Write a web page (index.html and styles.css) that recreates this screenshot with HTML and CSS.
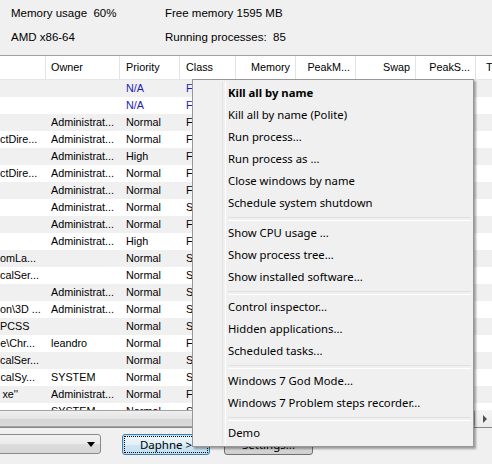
FILE: index.html
```html
<!DOCTYPE html>
<html>
	<head>
		<meta charset="UTF-8">
		<title>Daphne</title>
		<link rel="stylesheet" href="styles.css">
	</head>
	<body>
		<div class="win">
			<div class="stats">
				<span>Memory usage&nbsp; 60%</span>
				<span>Free memory 1595 MB</span>
				<span>AMD x86-64</span>
				<span>Running processes:&nbsp; 85</span>
			</div>

			<div class="list">
				<div class="head">
					<div class="c name"></div>
					<div class="c owner">Owner</div>
					<div class="c prio">Priority</div>
					<div class="c cls">Class</div>
					<div class="c num">Memory</div>
					<div class="c num">PeakM...</div>
					<div class="c num">Swap</div>
					<div class="c num">PeakS...</div>
					<div class="c last">T</div>
				</div>
				<div class="rows">
					<div class="row sys"><div class="c name"></div><div class="c owner"></div><div class="c prio">N/A</div><div class="c cls">F</div></div>
					<div class="row sys"><div class="c name"></div><div class="c owner"></div><div class="c prio">N/A</div><div class="c cls">F</div></div>
					<div class="row"><div class="c name"></div><div class="c owner">Administrat...</div><div class="c prio">Normal</div><div class="c cls">F</div></div>
					<div class="row"><div class="c name">ctDire...</div><div class="c owner">Administrat...</div><div class="c prio">Normal</div><div class="c cls">F</div></div>
					<div class="row"><div class="c name"></div><div class="c owner">Administrat...</div><div class="c prio">High</div><div class="c cls">F</div></div>
					<div class="row"><div class="c name">ctDire...</div><div class="c owner">Administrat...</div><div class="c prio">Normal</div><div class="c cls">F</div></div>
					<div class="row"><div class="c name"></div><div class="c owner">Administrat...</div><div class="c prio">Normal</div><div class="c cls">F</div></div>
					<div class="row"><div class="c name"></div><div class="c owner">Administrat...</div><div class="c prio">Normal</div><div class="c cls">S</div></div>
					<div class="row"><div class="c name"></div><div class="c owner">Administrat...</div><div class="c prio">Normal</div><div class="c cls">F</div></div>
					<div class="row"><div class="c name"></div><div class="c owner">Administrat...</div><div class="c prio">High</div><div class="c cls">F</div></div>
					<div class="row"><div class="c name">omLa...</div><div class="c owner"></div><div class="c prio">Normal</div><div class="c cls">S</div></div>
					<div class="row"><div class="c name">calSer...</div><div class="c owner"></div><div class="c prio">Normal</div><div class="c cls">S</div></div>
					<div class="row"><div class="c name"></div><div class="c owner">Administrat...</div><div class="c prio">Normal</div><div class="c cls">S</div></div>
					<div class="row"><div class="c name">on\3D ...</div><div class="c owner">Administrat...</div><div class="c prio">Normal</div><div class="c cls">S</div></div>
					<div class="row"><div class="c name pcss">PCSS</div><div class="c owner"></div><div class="c prio">Normal</div><div class="c cls">S</div></div>
					<div class="row"><div class="c name">e\Chr...</div><div class="c owner">leandro</div><div class="c prio">Normal</div><div class="c cls">F</div></div>
					<div class="row"><div class="c name">calSer...</div><div class="c owner"></div><div class="c prio">Normal</div><div class="c cls">S</div></div>
					<div class="row"><div class="c name">calSy...</div><div class="c owner">SYSTEM</div><div class="c prio">Normal</div><div class="c cls">S</div></div>
					<div class="row"><div class="c name exe">xe''</div><div class="c owner">Administrat...</div><div class="c prio">Normal</div><div class="c cls">F</div></div>
					<div class="row"><div class="c name"></div><div class="c owner">SYSTEM</div><div class="c prio">Normal</div><div class="c cls">S</div></div>
				</div>
				<div class="hscroll">
					<div class="thumb"></div>
					<div class="arrow"></div>
				</div>
			</div>

			<div class="bottom">
				<div class="combo"><span class="caret"></span></div>
				<div class="btn focus"><span>Daphne &gt;</span></div>
				<div class="btn"><span>Settings...</span></div>
			</div>

			<!-- context menu -->
			<ul class="menu">
				<li class="bold">Kill all by name</li>
				<li>Kill all by name (Polite)</li>
				<li>Run process...</li>
				<li>Run process as ...</li>
				<li>Close windows by name</li>
				<li>Schedule system shutdown</li>
				<li class="sep"></li>
				<li>Show CPU usage ...</li>
				<li>Show process tree...</li>
				<li>Show installed software...</li>
				<li class="sep"></li>
				<li>Control inspector...</li>
				<li>Hidden applications...</li>
				<li>Scheduled tasks...</li>
				<li class="sep"></li>
				<li>Windows 7 God Mode...</li>
				<li>Windows 7 Problem steps recorder...</li>
				<li class="sep"></li>
				<li>Demo</li>
			</ul>
		</div>
	</body>
</html>
```

FILE: styles.css
```css
*{
	padding: 0;
	margin: 0;
	box-sizing: border-box;
}
body{
	background: #f0f0f0;
	overflow: hidden;
}
.win{
	width: 492px;
	height: 464px;
	position: relative;
	overflow: hidden;
	font-family: "Liberation Sans", Arial, sans-serif;
	font-size: 10.8px;
	color: #000;
}

/* top info panel */
.stats{
	height: 56px;
	display: grid;
	grid-template-columns: 154px 1fr;
	grid-auto-rows: 16px;
	row-gap: 8px;
	padding: 5px 0 0 11px;
	border-bottom: 1px solid #a0a0a0;
	font-size: 11.5px;
	line-height: 16px;
	white-space: nowrap;
}

/* process list */
.list{
	background: #fff;
	border-bottom: 1px solid #828790;
}
.head, .row{
	display: flex;
	white-space: nowrap;
}
.head{
	height: 24px;
	line-height: 23px;
	border-bottom: 1px solid #e5e5e5;
}
.head .c{
	border-right: 1px solid #e3e3e3;
}
.c{
	flex: none;
	overflow: hidden;
}
.name{width: 46px; text-align: right; padding-right: 11px;}
.name.pcss{padding-right: 24px;}
.name.exe{padding-right: 28px;}
.owner{width: 74px; padding-left: 5px;}
.prio{width: 60px; padding-left: 6px;}
.cls{width: 56px; padding-left: 6px;}
.num{width: 60px; text-align: right; padding-right: 5px;}
.head .num:first-of-type{width: 59px;}
.last{width: 40px; padding-left: 10px;}
.head .last{border-right: none;}

.rows{
	height: 330px;
	overflow: hidden;
}
.row{
	height: 17px;
	line-height: 17px;
}
.row:nth-child(odd){
	background: #f0f0f0;
}
.row.sys .prio, .row.sys .cls{
	color: #1c1cb0;
}

.hscroll{
	height: 17px;
	display: flex;
	background: linear-gradient(#f4f4f4, #ececec);
}
.thumb{
	flex: 1;
	margin-left: -4px;
	border: 1px solid #a3a3a3;
	border-radius: 2px;
	background: linear-gradient(#f0f0f0 0%, #e4e4e4 50%, #d5d5d5 50%, #dadada 100%);
}
.arrow{
	width: 17px;
	position: relative;
}
.arrow:after{
	content: "";
	position: absolute;
	left: 8px;
	top: 5px;
	border-left: 4px solid #505050;
	border-top: 4px solid transparent;
	border-bottom: 4px solid transparent;
}

/* buttons row */
.bottom{
	height: 36px;
	display: flex;
	align-items: flex-start;
	padding-top: 6px;
}
.combo{
	width: 107px;
	height: 20px;
	margin-left: -6px;
	border: 1px solid #8a8a8a;
	border-radius: 3px;
	background: linear-gradient(#f2f2f2 0%, #ebebeb 50%, #dddddd 50%, #d6d6d6 100%);
	position: relative;
}
.caret{
	position: absolute;
	right: 5px;
	top: 7px;
	border-top: 5px solid #000;
	border-left: 4px solid transparent;
	border-right: 4px solid transparent;
}
.btn{
	width: 88px;
	height: 21px;
	margin-left: 21px;
	border: 1px solid #707070;
	border-radius: 3px;
	background: linear-gradient(#f2f2f2 0%, #ebebeb 50%, #dddddd 50%, #cfcfcf 100%);
	display: flex;
	align-items: center;
	justify-content: center;
	font-family: "Noto Sans", sans-serif;
	font-size: 11.5px;
}
.btn + .btn{
	margin-left: 14px;
	width: 89px;
}
.btn.focus{
	border-color: #3c7fb1;
	box-shadow: inset 0 0 0 1px #b9e2f8;
	background: linear-gradient(#eef7fc 0%, #e2f0f9 50%, #cfe6f4 50%, #c4dfef 100%);
}
.btn.focus span{
	outline: 1px dotted #000;
	outline-offset: 1px;
	width: 80px;
	text-align: center;
	line-height: 13px;
}

/* context menu */
.menu{
	position: absolute;
	left: 192px;
	top: 79px;
	width: 282px;
	list-style: none;
	padding: 2px;
	border: 1px solid #979797;
	background: #f0f0f0;
	box-shadow: 2px 2px 2px rgba(0,0,0,0.35);
	font-family: "Noto Sans", sans-serif;
	font-size: 11.3px;
	color: #000;
}
.menu:before{
	content: "";
	position: absolute;
	left: 29px;
	top: 2px;
	bottom: 2px;
	width: 2px;
	border-left: 1px solid #e2e3e3;
	border-right: 1px solid #fff;
}
.menu li{
	height: 22px;
	line-height: 22px;
	padding-left: 33px;
	white-space: nowrap;
}
.menu li.bold{
	font-weight: bold;
}
.menu li.sep{
	height: 8px;
	margin-left: 33px;
	padding: 0;
	position: relative;
}
.menu li.sep:after{
	content: "";
	position: absolute;
	left: 0;
	right: 0;
	top: 3px;
	height: 2px;
	border-top: 1px solid #e0e0e0;
	border-bottom: 1px solid #fff;
}
```
